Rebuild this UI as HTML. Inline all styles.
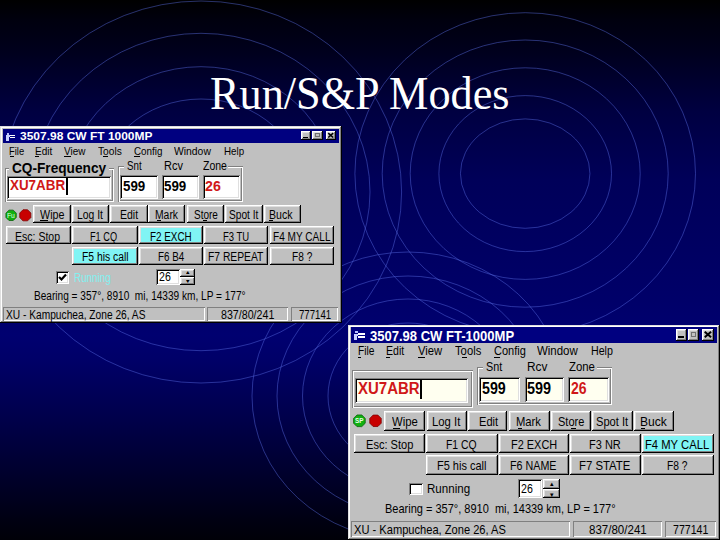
<!DOCTYPE html>
<html><head><meta charset="utf-8"><style>
html,body{margin:0;padding:0;}
body{width:720px;height:540px;overflow:hidden;position:relative;background:linear-gradient(to bottom,#000000 0px,#00000e 20px,#00001c 50px,#000041 112px,#000059 180px,#000062 250px,#000069 300px,#000070 335px,#000068 360px,#000054 400px,#00003f 440px,#000029 480px,#000012 520px,#000008 540px);font-family:'Liberation Sans',sans-serif;}
</style></head><body>
<svg style="position:absolute;left:0;top:0" width="720" height="540"><ellipse cx="525.2" cy="173.6" rx="64.75" ry="54.7" fill="none" stroke="rgba(90,110,230,0.45)" stroke-width="1"/><ellipse cx="525.2" cy="173.6" rx="86.3" ry="78" fill="none" stroke="rgba(90,110,230,0.45)" stroke-width="1"/><ellipse cx="525.2" cy="173.6" rx="115" ry="105.8" fill="none" stroke="rgba(90,110,230,0.45)" stroke-width="1"/><ellipse cx="525.2" cy="173.6" rx="143" ry="133.6" fill="none" stroke="rgba(90,110,230,0.45)" stroke-width="1"/><ellipse cx="525.2" cy="173.6" rx="170.3" ry="160.9" fill="none" stroke="rgba(90,110,230,0.45)" stroke-width="1"/><ellipse cx="201" cy="192" rx="102.8" ry="93" fill="none" stroke="rgba(90,110,230,0.45)" stroke-width="1"/><ellipse cx="201" cy="192" rx="134.6" ry="125.3" fill="none" stroke="rgba(90,110,230,0.45)" stroke-width="1"/><ellipse cx="201" cy="192" rx="169" ry="158.7" fill="none" stroke="rgba(90,110,230,0.45)" stroke-width="1"/><ellipse cx="201" cy="192" rx="200.6" ry="191" fill="none" stroke="rgba(90,110,230,0.45)" stroke-width="1"/><ellipse cx="408" cy="396" rx="80" ry="73" fill="none" stroke="rgba(90,110,230,0.45)" stroke-width="1"/><ellipse cx="408" cy="396" rx="105.5" ry="97" fill="none" stroke="rgba(90,110,230,0.45)" stroke-width="1"/><ellipse cx="408" cy="396" rx="131" ry="120" fill="none" stroke="rgba(90,110,230,0.45)" stroke-width="1"/><ellipse cx="408" cy="396" rx="156" ry="144" fill="none" stroke="rgba(90,110,230,0.45)" stroke-width="1"/></svg>
<div style="position:absolute;left:209.56px;top:69.99px;font:normal 47px 'Liberation Serif', serif;line-height:1;white-space:pre;color:#fff;transform-origin:0 0;transform:scaleX(0.9413);">Run/S&amp;P Modes</div>
<div style="position:absolute;left:0.00px;top:126.00px;width:342.00px;height:197.00px;background:#c0c0c0;box-shadow:inset -1px -1px #000,inset 1px 1px #dfdfdf,inset -2px -2px #808080,inset 2px 2px #fff;"></div>
<div style="position:absolute;left:3.00px;top:129.00px;width:336.00px;height:14.00px;background:#000080;"></div>
<div style="position:absolute;left:7.00px;top:132.50px;width:2.00px;height:2.00px;background:#b8c0ff;"></div>
<div style="position:absolute;left:6.00px;top:135.00px;width:2.50px;height:6.00px;background:#c8d0ff;"></div>
<div style="position:absolute;left:8.50px;top:135.00px;width:1.50px;height:2.00px;background:#c8d0ff;"></div>
<div style="position:absolute;left:10.00px;top:134.80px;width:5.00px;height:1.20px;background:#fff;"></div>
<div style="position:absolute;left:10.00px;top:136.90px;width:5.00px;height:1.30px;background:#fff;"></div>
<div style="position:absolute;left:20.00px;top:131.38px;font:bold 10.5px 'Liberation Sans', sans-serif;line-height:1;white-space:pre;color:#fff;transform-origin:0 0;transform:scaleX(1.1409);">3507.98 CW FT 1000MP</div>
<div style="position:absolute;left:301.00px;top:131.00px;width:9.50px;height:9.00px;background:#c0c0c0;box-shadow:inset -1px -1px #000,inset 1px 1px #fff,inset -2px -2px #808080,inset 2px 2px #dfdfdf;"></div>
<div style="position:absolute;left:312.00px;top:131.00px;width:11.00px;height:9.00px;background:#c0c0c0;box-shadow:inset -1px -1px #000,inset 1px 1px #fff,inset -2px -2px #808080,inset 2px 2px #dfdfdf;"></div>
<div style="position:absolute;left:326.00px;top:131.00px;width:10.00px;height:9.00px;background:#c0c0c0;box-shadow:inset -1px -1px #000,inset 1px 1px #fff,inset -2px -2px #808080,inset 2px 2px #dfdfdf;"></div>
<div style="position:absolute;left:303.09px;top:136.58px;width:4.75px;height:1.62px;background:#000;"></div>
<div style="position:absolute;left:314.75px;top:133.25px;width:4.95px;height:4.23px;background:transparent;box-sizing:border-box;border:1px solid #707070;border-top-width:1.5px;"></div>
<svg style="position:absolute;left:0;top:0;overflow:visible" width="1" height="1"><path d="M328.22 133.16 L333.18 137.48 M333.18 133.16 L328.22 137.48" stroke="#000" stroke-width="1.53"/></svg>
<div style="position:absolute;left:9.20px;top:145.53px;font:normal 11.5px 'Liberation Sans', sans-serif;line-height:1;white-space:pre;color:#000;transform-origin:0 0;transform:scaleX(0.8161);">File</div>
<div style="position:absolute;left:35.00px;top:145.53px;font:normal 11.5px 'Liberation Sans', sans-serif;line-height:1;white-space:pre;color:#000;transform-origin:0 0;transform:scaleX(0.8729);">Edit</div>
<div style="position:absolute;left:64.00px;top:145.53px;font:normal 11.5px 'Liberation Sans', sans-serif;line-height:1;white-space:pre;color:#000;transform-origin:0 0;transform:scaleX(0.8657);">View</div>
<div style="position:absolute;left:98.00px;top:145.53px;font:normal 11.5px 'Liberation Sans', sans-serif;line-height:1;white-space:pre;color:#000;transform-origin:0 0;transform:scaleX(0.8857);">Tools</div>
<div style="position:absolute;left:134.40px;top:145.53px;font:normal 11.5px 'Liberation Sans', sans-serif;line-height:1;white-space:pre;color:#000;transform-origin:0 0;transform:scaleX(0.8555);">Config</div>
<div style="position:absolute;left:174.00px;top:145.53px;font:normal 11.5px 'Liberation Sans', sans-serif;line-height:1;white-space:pre;color:#000;transform-origin:0 0;transform:scaleX(0.9015);">Window</div>
<div style="position:absolute;left:224.00px;top:145.53px;font:normal 11.5px 'Liberation Sans', sans-serif;line-height:1;white-space:pre;color:#000;transform-origin:0 0;transform:scaleX(0.8493);">Help</div>
<div style="position:absolute;left:10.00px;top:156.00px;width:3.50px;height:1.00px;background:#000;"></div>
<div style="position:absolute;left:35.00px;top:156.00px;width:3.75px;height:1.00px;background:#000;"></div>
<div style="position:absolute;left:63.75px;top:156.00px;width:7.25px;height:1.00px;background:#000;"></div>
<div style="position:absolute;left:102.50px;top:156.00px;width:5.00px;height:1.00px;background:#000;"></div>
<div style="position:absolute;left:134.00px;top:156.00px;width:6.00px;height:1.00px;background:#000;"></div>
<div style="position:absolute;left:4.50px;top:167.50px;width:109.50px;height:34.00px;background:transparent;box-shadow:inset 1px 1px #808080,inset -1px -1px #fff,inset 2px 2px #fff,inset -2px -2px #808080;"></div>
<div style="position:absolute;left:9.00px;top:162.00px;width:100.00px;height:9.00px;background:#c0c0c0;"></div>
<div style="position:absolute;left:11.70px;top:160.60px;font:bold 14px 'Liberation Sans', sans-serif;line-height:1;white-space:pre;color:#000;transform-origin:0 0;transform:scaleX(0.9754);">CQ-Frequency</div>
<div style="position:absolute;left:6.70px;top:175.80px;width:104.30px;height:23.40px;background:#fff;box-shadow:inset 1px 1px #808080,inset -1px -1px #fff,inset 2px 2px #000,inset -2px -2px #dfdfdf;"></div>
<div style="position:absolute;left:10.00px;top:178.10px;font:bold 14px 'Liberation Sans', sans-serif;line-height:1;white-space:pre;color:#d01818;transform-origin:0 0;transform:scaleX(0.9573);">XU7ABR</div>
<div style="position:absolute;left:65.50px;top:178.00px;width:2.00px;height:17.00px;background:#000;"></div>
<div style="position:absolute;left:117.70px;top:166.00px;width:125.00px;height:35.50px;background:transparent;box-shadow:inset 1px 1px #808080,inset -1px -1px #fff,inset 2px 2px #fff,inset -2px -2px #808080;"></div>
<div style="position:absolute;left:124.00px;top:160.00px;width:104.00px;height:10.00px;background:#c0c0c0;"></div>
<div style="position:absolute;left:126.70px;top:159.57px;font:normal 12.5px 'Liberation Sans', sans-serif;line-height:1;white-space:pre;color:#000;transform-origin:0 0;transform:scaleX(0.7776);">Snt</div>
<div style="position:absolute;left:163.72px;top:159.57px;font:normal 12.5px 'Liberation Sans', sans-serif;line-height:1;white-space:pre;color:#000;transform-origin:0 0;transform:scaleX(0.8789);">Rcv</div>
<div style="position:absolute;left:203.00px;top:159.57px;font:normal 12.5px 'Liberation Sans', sans-serif;line-height:1;white-space:pre;color:#000;transform-origin:0 0;transform:scaleX(0.8409);">Zone</div>
<div style="position:absolute;left:120.40px;top:175.40px;width:37.90px;height:24.00px;background:#fff;box-shadow:inset 1px 1px #808080,inset -1px -1px #fff,inset 2px 2px #000,inset -2px -2px #dfdfdf;"></div>
<div style="position:absolute;left:122.90px;top:179.10px;font:bold 14px 'Liberation Sans', sans-serif;line-height:1;white-space:pre;color:#000;transform-origin:0 0;transform:scaleX(0.9545);">599</div>
<div style="position:absolute;left:161.50px;top:175.40px;width:37.50px;height:24.00px;background:#fff;box-shadow:inset 1px 1px #808080,inset -1px -1px #fff,inset 2px 2px #000,inset -2px -2px #dfdfdf;"></div>
<div style="position:absolute;left:164.00px;top:179.10px;font:bold 14px 'Liberation Sans', sans-serif;line-height:1;white-space:pre;color:#000;transform-origin:0 0;transform:scaleX(0.9545);">599</div>
<div style="position:absolute;left:202.50px;top:175.40px;width:37.50px;height:24.00px;background:#fff;box-shadow:inset 1px 1px #808080,inset -1px -1px #fff,inset 2px 2px #000,inset -2px -2px #dfdfdf;"></div>
<div style="position:absolute;left:205.00px;top:179.10px;font:bold 14px 'Liberation Sans', sans-serif;line-height:1;white-space:pre;color:#d01818;transform-origin:0 0;transform:scaleX(1.0135);">26</div>
<svg style="position:absolute;left:0;top:0;overflow:visible" width="1" height="1"><polygon points="16.27,217.44 13.24,220.47 8.96,220.47 5.93,217.44 5.93,213.16 8.96,210.13 13.24,210.13 16.27,213.16" fill="#10b010" stroke="#0a600a" stroke-width="0.8"/></svg>
<div style="position:absolute;left:7.30px;top:211.82px;font:normal 7.5px 'Liberation Sans', sans-serif;line-height:1;white-space:pre;color:#e0ffe0;transform-origin:0 0;transform:scaleX(0.8973);">Fu</div>
<svg style="position:absolute;left:0;top:0;overflow:visible" width="1" height="1"><polygon points="30.84,217.60 27.60,220.84 23.00,220.84 19.76,217.60 19.76,213.00 23.00,209.76 27.60,209.76 30.84,213.00" fill="#c80000" stroke="#800000" stroke-width="0.8"/></svg>
<div style="position:absolute;left:33.30px;top:205.00px;width:37.50px;height:18.00px;background:#c0c0c0;box-shadow:inset -1px -1px #000,inset 1px 1px #fff,inset -2px -2px #808080,inset 2px 2px #dfdfdf;"></div>
<div style="position:absolute;left:40.00px;top:208.57px;font:normal 12.5px 'Liberation Sans', sans-serif;line-height:1;white-space:pre;color:#000;transform-origin:0 0;transform:scaleX(0.8588);">Wipe</div>
<div style="position:absolute;left:72.00px;top:205.00px;width:37.00px;height:18.00px;background:#c0c0c0;box-shadow:inset -1px -1px #000,inset 1px 1px #fff,inset -2px -2px #808080,inset 2px 2px #dfdfdf;"></div>
<div style="position:absolute;left:76.67px;top:208.57px;font:normal 12.5px 'Liberation Sans', sans-serif;line-height:1;white-space:pre;color:#000;transform-origin:0 0;transform:scaleX(0.8279);">Log It</div>
<div style="position:absolute;left:110.00px;top:205.00px;width:37.50px;height:18.00px;background:#c0c0c0;box-shadow:inset -1px -1px #000,inset 1px 1px #fff,inset -2px -2px #808080,inset 2px 2px #dfdfdf;"></div>
<div style="position:absolute;left:119.96px;top:208.57px;font:normal 12.5px 'Liberation Sans', sans-serif;line-height:1;white-space:pre;color:#000;transform-origin:0 0;transform:scaleX(0.8402);">Edit</div>
<div style="position:absolute;left:148.00px;top:205.00px;width:37.40px;height:18.00px;background:#c0c0c0;box-shadow:inset -1px -1px #000,inset 1px 1px #fff,inset -2px -2px #808080,inset 2px 2px #dfdfdf;"></div>
<div style="position:absolute;left:155.37px;top:208.57px;font:normal 12.5px 'Liberation Sans', sans-serif;line-height:1;white-space:pre;color:#000;transform-origin:0 0;transform:scaleX(0.8283);">Mark</div>
<div style="position:absolute;left:186.50px;top:205.00px;width:37.50px;height:18.00px;background:#c0c0c0;box-shadow:inset -1px -1px #000,inset 1px 1px #fff,inset -2px -2px #808080,inset 2px 2px #dfdfdf;"></div>
<div style="position:absolute;left:193.60px;top:208.57px;font:normal 12.5px 'Liberation Sans', sans-serif;line-height:1;white-space:pre;color:#000;transform-origin:0 0;transform:scaleX(0.7987);">Store</div>
<div style="position:absolute;left:224.60px;top:205.00px;width:38.10px;height:18.00px;background:#c0c0c0;box-shadow:inset -1px -1px #000,inset 1px 1px #fff,inset -2px -2px #808080,inset 2px 2px #dfdfdf;"></div>
<div style="position:absolute;left:228.50px;top:208.57px;font:normal 12.5px 'Liberation Sans', sans-serif;line-height:1;white-space:pre;color:#000;transform-origin:0 0;transform:scaleX(0.8129);">Spot It</div>
<div style="position:absolute;left:263.50px;top:205.00px;width:37.00px;height:18.00px;background:#c0c0c0;box-shadow:inset -1px -1px #000,inset 1px 1px #fff,inset -2px -2px #808080,inset 2px 2px #dfdfdf;"></div>
<div style="position:absolute;left:268.55px;top:208.57px;font:normal 12.5px 'Liberation Sans', sans-serif;line-height:1;white-space:pre;color:#000;transform-origin:0 0;transform:scaleX(0.8461);">Buck</div>
<div style="position:absolute;left:40.00px;top:219.80px;width:7.50px;height:1.00px;background:#000;"></div>
<div style="position:absolute;left:156.70px;top:219.80px;width:4.80px;height:1.00px;background:#000;"></div>
<div style="position:absolute;left:202.90px;top:219.80px;width:3.80px;height:1.00px;background:#000;"></div>
<div style="position:absolute;left:268.90px;top:219.80px;width:4.40px;height:1.00px;background:#000;"></div>
<div style="position:absolute;left:5.50px;top:226.00px;width:65.75px;height:18.00px;background:#c0c0c0;box-shadow:inset -1px -1px #000,inset 1px 1px #fff,inset -2px -2px #808080,inset 2px 2px #dfdfdf;"></div>
<div style="position:absolute;left:15.41px;top:230.78px;font:normal 12.5px 'Liberation Sans', sans-serif;line-height:1;white-space:pre;color:#000;transform-origin:0 0;transform:scaleX(0.8421);">Esc: Stop</div>
<div style="position:absolute;left:72.00px;top:226.00px;width:66.00px;height:18.00px;background:#c0c0c0;box-shadow:inset -1px -1px #000,inset 1px 1px #fff,inset -2px -2px #808080,inset 2px 2px #dfdfdf;"></div>
<div style="position:absolute;left:90.27px;top:230.78px;font:normal 12.5px 'Liberation Sans', sans-serif;line-height:1;white-space:pre;color:#000;transform-origin:0 0;transform:scaleX(0.7343);">F1 CQ</div>
<div style="position:absolute;left:138.75px;top:226.00px;width:64.15px;height:18.00px;background:#80f4f4;box-shadow:inset -1px -1px #000,inset 1px 1px #fff,inset -2px -2px #808080,inset 2px 2px #dfdfdf;"></div>
<div style="position:absolute;left:149.61px;top:230.78px;font:normal 12.5px 'Liberation Sans', sans-serif;line-height:1;white-space:pre;color:#000;transform-origin:0 0;transform:scaleX(0.7882);">F2 EXCH</div>
<div style="position:absolute;left:204.30px;top:226.00px;width:64.20px;height:18.00px;background:#c0c0c0;box-shadow:inset -1px -1px #000,inset 1px 1px #fff,inset -2px -2px #808080,inset 2px 2px #dfdfdf;"></div>
<div style="position:absolute;left:223.14px;top:230.78px;font:normal 12.5px 'Liberation Sans', sans-serif;line-height:1;white-space:pre;color:#000;transform-origin:0 0;transform:scaleX(0.7597);">F3 TU</div>
<div style="position:absolute;left:270.00px;top:226.00px;width:64.00px;height:18.00px;background:#c0c0c0;box-shadow:inset -1px -1px #000,inset 1px 1px #fff,inset -2px -2px #808080,inset 2px 2px #dfdfdf;"></div>
<div style="position:absolute;left:273.49px;top:230.78px;font:normal 12.5px 'Liberation Sans', sans-serif;line-height:1;white-space:pre;color:#000;transform-origin:0 0;transform:scaleX(0.8060);">F4 MY CALL</div>
<div style="position:absolute;left:72.00px;top:246.50px;width:66.00px;height:18.00px;background:#80f4f4;box-shadow:inset -1px -1px #000,inset 1px 1px #fff,inset -2px -2px #808080,inset 2px 2px #dfdfdf;"></div>
<div style="position:absolute;left:81.67px;top:251.07px;font:normal 12.5px 'Liberation Sans', sans-serif;line-height:1;white-space:pre;color:#000;transform-origin:0 0;transform:scaleX(0.8258);">F5 his call</div>
<div style="position:absolute;left:138.75px;top:246.50px;width:64.15px;height:18.00px;background:#c0c0c0;box-shadow:inset -1px -1px #000,inset 1px 1px #fff,inset -2px -2px #808080,inset 2px 2px #dfdfdf;"></div>
<div style="position:absolute;left:157.82px;top:251.07px;font:normal 12.5px 'Liberation Sans', sans-serif;line-height:1;white-space:pre;color:#000;transform-origin:0 0;transform:scaleX(0.7840);">F6 B4</div>
<div style="position:absolute;left:204.30px;top:246.50px;width:64.20px;height:18.00px;background:#c0c0c0;box-shadow:inset -1px -1px #000,inset 1px 1px #fff,inset -2px -2px #808080,inset 2px 2px #dfdfdf;"></div>
<div style="position:absolute;left:208.48px;top:251.07px;font:normal 12.5px 'Liberation Sans', sans-serif;line-height:1;white-space:pre;color:#000;transform-origin:0 0;transform:scaleX(0.8239);">F7 REPEAT</div>
<div style="position:absolute;left:270.00px;top:246.50px;width:64.00px;height:18.00px;background:#c0c0c0;box-shadow:inset -1px -1px #000,inset 1px 1px #fff,inset -2px -2px #808080,inset 2px 2px #dfdfdf;"></div>
<div style="position:absolute;left:291.89px;top:251.07px;font:normal 12.5px 'Liberation Sans', sans-serif;line-height:1;white-space:pre;color:#000;transform-origin:0 0;transform:scaleX(0.8105);">F8 ?</div>
<div style="position:absolute;left:56.00px;top:271.00px;width:12.75px;height:12.75px;background:#fff;box-shadow:inset 1px 1px #808080,inset -1px -1px #fff,inset 2px 2px #000,inset -2px -2px #dfdfdf;"></div>
<svg style="position:absolute;left:56px;top:271px" width="13" height="13"><path d="M3 6 L5.5 8.5 L10 3.5" stroke="#000" stroke-width="2.2" fill="none"/></svg>
<div style="position:absolute;left:74.21px;top:271.88px;font:normal 12.5px 'Liberation Sans', sans-serif;line-height:1;white-space:pre;color:#80f0f0;transform-origin:0 0;transform:scaleX(0.7893);">Running</div>
<div style="position:absolute;left:156.20px;top:268.50px;width:23.40px;height:16.50px;background:#fff;box-shadow:inset 1px 1px #808080,inset -1px -1px #fff,inset 2px 2px #000,inset -2px -2px #dfdfdf;"></div>
<div style="position:absolute;left:159.00px;top:271.38px;font:normal 12.5px 'Liberation Sans', sans-serif;line-height:1;white-space:pre;color:#000;transform-origin:0 0;transform:scaleX(0.8458);">26</div>
<div style="position:absolute;left:180.00px;top:268.50px;width:14.70px;height:8.20px;background:#c0c0c0;box-shadow:inset -1px -1px #000,inset 1px 1px #fff,inset -2px -2px #808080,inset 2px 2px #dfdfdf;"></div>
<div style="position:absolute;left:180.00px;top:276.70px;width:14.70px;height:8.30px;background:#c0c0c0;box-shadow:inset -1px -1px #000,inset 1px 1px #fff,inset -2px -2px #808080,inset 2px 2px #dfdfdf;"></div>
<div style="position:absolute;left:185.50px;top:269.40px;font:normal 6px 'Liberation Sans', sans-serif;line-height:1;white-space:pre;color:#000;transform-origin:0 0;transform:scaleX(1.1667);">▴</div>
<div style="position:absolute;left:185.50px;top:277.90px;font:normal 6px 'Liberation Sans', sans-serif;line-height:1;white-space:pre;color:#000;transform-origin:0 0;transform:scaleX(1.1667);">▾</div>
<div style="position:absolute;left:34.19px;top:289.88px;font:normal 12.5px 'Liberation Sans', sans-serif;line-height:1;white-space:pre;color:#000;transform-origin:0 0;transform:scaleX(0.8077);">Bearing = 357°, 8910  mi, 14339 km, LP = 177°</div>
<div style="position:absolute;left:3.00px;top:307.00px;width:202.00px;height:14.00px;background:#c0c0c0;box-shadow:inset 1px 1px #808080,inset -1px -1px #fff;"></div>
<div style="position:absolute;left:206.70px;top:307.00px;width:81.10px;height:14.00px;background:#c0c0c0;box-shadow:inset 1px 1px #808080,inset -1px -1px #fff;"></div>
<div style="position:absolute;left:291.00px;top:307.00px;width:46.80px;height:14.00px;background:#c0c0c0;box-shadow:inset 1px 1px #808080,inset -1px -1px #fff;"></div>
<div style="position:absolute;left:6.25px;top:308.68px;font:normal 12.5px 'Liberation Sans', sans-serif;line-height:1;white-space:pre;color:#000;transform-origin:0 0;transform:scaleX(0.8159);">XU - Kampuchea, Zone 26, AS</div>
<div style="position:absolute;left:221.00px;top:308.68px;font:normal 12.5px 'Liberation Sans', sans-serif;line-height:1;white-space:pre;color:#000;transform-origin:0 0;transform:scaleX(0.8529);">837/80/241</div>
<div style="position:absolute;left:298.90px;top:308.68px;font:normal 12.5px 'Liberation Sans', sans-serif;line-height:1;white-space:pre;color:#000;transform-origin:0 0;transform:scaleX(0.7687);">777141</div>
<div style="position:absolute;left:348.00px;top:324.50px;width:371.50px;height:215.50px;background:#c0c0c0;box-shadow:inset -1px -1px #000,inset 1px 1px #dfdfdf,inset -2px -2px #808080,inset 2px 2px #fff;"></div>
<div style="position:absolute;left:351.00px;top:327.00px;width:366.00px;height:15.80px;background:#000080;"></div>
<div style="position:absolute;left:355.00px;top:331.00px;width:2.50px;height:2.00px;background:#b8c0ff;"></div>
<div style="position:absolute;left:354.00px;top:334.00px;width:2.50px;height:6.00px;background:#c8d0ff;"></div>
<div style="position:absolute;left:356.50px;top:334.00px;width:1.50px;height:2.00px;background:#c8d0ff;"></div>
<div style="position:absolute;left:358.00px;top:332.90px;width:7.00px;height:1.70px;background:#fff;"></div>
<div style="position:absolute;left:358.00px;top:335.80px;width:7.00px;height:2.40px;background:#fff;"></div>
<div style="position:absolute;left:370.00px;top:328.80px;font:bold 14px 'Liberation Sans', sans-serif;line-height:1;white-space:pre;color:#fff;transform-origin:0 0;transform:scaleX(0.9304);">3507.98 CW FT-1000MP</div>
<div style="position:absolute;left:675.50px;top:329.00px;width:11.20px;height:11.50px;background:#c0c0c0;box-shadow:inset -1px -1px #000,inset 1px 1px #fff,inset -2px -2px #808080,inset 2px 2px #dfdfdf;"></div>
<div style="position:absolute;left:688.00px;top:329.00px;width:11.00px;height:11.50px;background:#c0c0c0;box-shadow:inset -1px -1px #000,inset 1px 1px #fff,inset -2px -2px #808080,inset 2px 2px #dfdfdf;"></div>
<div style="position:absolute;left:702.00px;top:329.00px;width:12.40px;height:11.50px;background:#c0c0c0;box-shadow:inset -1px -1px #000,inset 1px 1px #fff,inset -2px -2px #808080,inset 2px 2px #dfdfdf;"></div>
<div style="position:absolute;left:677.96px;top:336.13px;width:5.60px;height:2.07px;background:#000;"></div>
<div style="position:absolute;left:690.75px;top:331.88px;width:4.95px;height:5.40px;background:transparent;box-sizing:border-box;border:1px solid #707070;border-top-width:1.5px;"></div>
<svg style="position:absolute;left:0;top:0;overflow:visible" width="1" height="1"><path d="M704.73 331.76 L711.07 337.28 M711.07 331.76 L704.73 337.28" stroke="#000" stroke-width="1.96"/></svg>
<div style="position:absolute;left:357.50px;top:344.80px;font:normal 12px 'Liberation Sans', sans-serif;line-height:1;white-space:pre;color:#000;transform-origin:0 0;transform:scaleX(0.8519);">File</div>
<div style="position:absolute;left:386.25px;top:344.80px;font:normal 12px 'Liberation Sans', sans-serif;line-height:1;white-space:pre;color:#000;transform-origin:0 0;transform:scaleX(0.8785);">Edit</div>
<div style="position:absolute;left:418.00px;top:344.80px;font:normal 12px 'Liberation Sans', sans-serif;line-height:1;white-space:pre;color:#000;transform-origin:0 0;transform:scaleX(0.9377);">View</div>
<div style="position:absolute;left:455.00px;top:344.80px;font:normal 12px 'Liberation Sans', sans-serif;line-height:1;white-space:pre;color:#000;transform-origin:0 0;transform:scaleX(0.9370);">Tools</div>
<div style="position:absolute;left:493.75px;top:344.80px;font:normal 12px 'Liberation Sans', sans-serif;line-height:1;white-space:pre;color:#000;transform-origin:0 0;transform:scaleX(0.9187);">Config</div>
<div style="position:absolute;left:537.20px;top:344.80px;font:normal 12px 'Liberation Sans', sans-serif;line-height:1;white-space:pre;color:#000;transform-origin:0 0;transform:scaleX(0.9555);">Window</div>
<div style="position:absolute;left:590.80px;top:344.80px;font:normal 12px 'Liberation Sans', sans-serif;line-height:1;white-space:pre;color:#000;transform-origin:0 0;transform:scaleX(0.8878);">Help</div>
<div style="position:absolute;left:357.50px;top:357.30px;width:3.50px;height:1.00px;background:#000;"></div>
<div style="position:absolute;left:386.00px;top:357.30px;width:4.00px;height:1.00px;background:#000;"></div>
<div style="position:absolute;left:418.00px;top:357.30px;width:7.00px;height:1.00px;background:#000;"></div>
<div style="position:absolute;left:462.00px;top:357.30px;width:5.00px;height:1.00px;background:#000;"></div>
<div style="position:absolute;left:494.00px;top:357.30px;width:6.00px;height:1.00px;background:#000;"></div>
<div style="position:absolute;left:352.00px;top:370.00px;width:120.50px;height:37.50px;background:transparent;box-shadow:inset 1px 1px #808080,inset -1px -1px #fff,inset 2px 2px #fff,inset -2px -2px #808080;"></div>
<div style="position:absolute;left:354.50px;top:377.50px;width:113.50px;height:25.50px;background:#fffff0;box-shadow:inset 1px 1px #808080,inset -1px -1px #fff,inset 2px 2px #000,inset -2px -2px #dfdfdf;"></div>
<div style="position:absolute;left:357.50px;top:380.90px;font:bold 16px 'Liberation Sans', sans-serif;line-height:1;white-space:pre;color:#d01818;transform-origin:0 0;transform:scaleX(0.9361);">XU7ABR</div>
<div style="position:absolute;left:420.00px;top:380.00px;width:2.00px;height:19.00px;background:#000;"></div>
<div style="position:absolute;left:476.70px;top:367.40px;width:135.00px;height:37.50px;background:transparent;box-shadow:inset 1px 1px #808080,inset -1px -1px #fff,inset 2px 2px #fff,inset -2px -2px #808080;"></div>
<div style="position:absolute;left:483.00px;top:360.00px;width:114.00px;height:10.00px;background:#c0c0c0;"></div>
<div style="position:absolute;left:485.60px;top:360.88px;font:normal 12.5px 'Liberation Sans', sans-serif;line-height:1;white-space:pre;color:#000;transform-origin:0 0;transform:scaleX(0.8658);">Snt</div>
<div style="position:absolute;left:526.95px;top:360.88px;font:normal 12.5px 'Liberation Sans', sans-serif;line-height:1;white-space:pre;color:#000;transform-origin:0 0;transform:scaleX(0.9494);">Rcv</div>
<div style="position:absolute;left:569.00px;top:360.88px;font:normal 12.5px 'Liberation Sans', sans-serif;line-height:1;white-space:pre;color:#000;transform-origin:0 0;transform:scaleX(0.9110);">Zone</div>
<div style="position:absolute;left:478.75px;top:377.20px;width:41.25px;height:25.00px;background:#fffff0;box-shadow:inset 1px 1px #808080,inset -1px -1px #fff,inset 2px 2px #000,inset -2px -2px #dfdfdf;"></div>
<div style="position:absolute;left:482.00px;top:380.90px;font:bold 16px 'Liberation Sans', sans-serif;line-height:1;white-space:pre;color:#000;transform-origin:0 0;transform:scaleX(0.8882);">599</div>
<div style="position:absolute;left:524.60px;top:377.20px;width:39.15px;height:25.00px;background:#fffff0;box-shadow:inset 1px 1px #808080,inset -1px -1px #fff,inset 2px 2px #000,inset -2px -2px #dfdfdf;"></div>
<div style="position:absolute;left:526.70px;top:380.90px;font:bold 16px 'Liberation Sans', sans-serif;line-height:1;white-space:pre;color:#000;transform-origin:0 0;transform:scaleX(0.8994);">599</div>
<div style="position:absolute;left:568.30px;top:377.20px;width:40.90px;height:25.00px;background:#fffff0;box-shadow:inset 1px 1px #808080,inset -1px -1px #fff,inset 2px 2px #000,inset -2px -2px #dfdfdf;"></div>
<div style="position:absolute;left:571.00px;top:380.90px;font:bold 16px 'Liberation Sans', sans-serif;line-height:1;white-space:pre;color:#d01818;transform-origin:0 0;transform:scaleX(0.8772);">26</div>
<svg style="position:absolute;left:0;top:0;overflow:visible" width="1" height="1"><polygon points="365.22,423.21 361.81,426.62 356.99,426.62 353.58,423.21 353.58,418.39 356.99,414.98 361.81,414.98 365.22,418.39" fill="#10b010" stroke="#0a600a" stroke-width="0.8"/></svg>
<div style="position:absolute;left:355.00px;top:417.20px;font:bold 8px 'Liberation Sans', sans-serif;line-height:1;white-space:pre;color:#e8ffe8;transform-origin:0 0;transform:scaleX(0.7939);">SP</div>
<svg style="position:absolute;left:0;top:0;overflow:visible" width="1" height="1"><polygon points="381.23,423.17 377.87,426.53 373.13,426.53 369.77,423.17 369.77,418.43 373.13,415.07 377.87,415.07 381.23,418.43" fill="#c80000" stroke="#800000" stroke-width="0.8"/></svg>
<div style="position:absolute;left:383.90px;top:411.00px;width:41.60px;height:19.50px;background:#c0c0c0;box-shadow:inset -1px -1px #000,inset 1px 1px #fff,inset -2px -2px #808080,inset 2px 2px #dfdfdf;"></div>
<div style="position:absolute;left:392.20px;top:414.95px;font:normal 13px 'Liberation Sans', sans-serif;line-height:1;white-space:pre;color:#000;transform-origin:0 0;transform:scaleX(0.8711);">Wipe</div>
<div style="position:absolute;left:427.00px;top:411.00px;width:39.70px;height:19.50px;background:#c0c0c0;box-shadow:inset -1px -1px #000,inset 1px 1px #fff,inset -2px -2px #808080,inset 2px 2px #dfdfdf;"></div>
<div style="position:absolute;left:431.63px;top:414.95px;font:normal 13px 'Liberation Sans', sans-serif;line-height:1;white-space:pre;color:#000;transform-origin:0 0;transform:scaleX(0.8711);">Log It</div>
<div style="position:absolute;left:467.80px;top:411.00px;width:39.70px;height:19.50px;background:#c0c0c0;box-shadow:inset -1px -1px #000,inset 1px 1px #fff,inset -2px -2px #808080,inset 2px 2px #dfdfdf;"></div>
<div style="position:absolute;left:478.85px;top:414.95px;font:normal 13px 'Liberation Sans', sans-serif;line-height:1;white-space:pre;color:#000;transform-origin:0 0;transform:scaleX(0.8536);">Edit</div>
<div style="position:absolute;left:509.00px;top:411.00px;width:41.00px;height:19.50px;background:#c0c0c0;box-shadow:inset -1px -1px #000,inset 1px 1px #fff,inset -2px -2px #808080,inset 2px 2px #dfdfdf;"></div>
<div style="position:absolute;left:516.34px;top:414.95px;font:normal 13px 'Liberation Sans', sans-serif;line-height:1;white-space:pre;color:#000;transform-origin:0 0;transform:scaleX(0.8630);">Mark</div>
<div style="position:absolute;left:551.00px;top:411.00px;width:39.80px;height:19.50px;background:#c0c0c0;box-shadow:inset -1px -1px #000,inset 1px 1px #fff,inset -2px -2px #808080,inset 2px 2px #dfdfdf;"></div>
<div style="position:absolute;left:558.30px;top:414.95px;font:normal 13px 'Liberation Sans', sans-serif;line-height:1;white-space:pre;color:#000;transform-origin:0 0;transform:scaleX(0.8463);">Store</div>
<div style="position:absolute;left:592.00px;top:411.00px;width:40.50px;height:19.50px;background:#c0c0c0;box-shadow:inset -1px -1px #000,inset 1px 1px #fff,inset -2px -2px #808080,inset 2px 2px #dfdfdf;"></div>
<div style="position:absolute;left:596.40px;top:414.95px;font:normal 13px 'Liberation Sans', sans-serif;line-height:1;white-space:pre;color:#000;transform-origin:0 0;transform:scaleX(0.8560);">Spot It</div>
<div style="position:absolute;left:634.00px;top:411.00px;width:40.00px;height:19.50px;background:#c0c0c0;box-shadow:inset -1px -1px #000,inset 1px 1px #fff,inset -2px -2px #808080,inset 2px 2px #dfdfdf;"></div>
<div style="position:absolute;left:639.87px;top:414.95px;font:normal 13px 'Liberation Sans', sans-serif;line-height:1;white-space:pre;color:#000;transform-origin:0 0;transform:scaleX(0.9295);">Buck</div>
<div style="position:absolute;left:392.50px;top:427.50px;width:7.50px;height:1.00px;background:#000;"></div>
<div style="position:absolute;left:517.50px;top:427.50px;width:4.50px;height:1.00px;background:#000;"></div>
<div style="position:absolute;left:571.00px;top:427.50px;width:5.00px;height:1.00px;background:#000;"></div>
<div style="position:absolute;left:640.80px;top:427.50px;width:4.20px;height:1.00px;background:#000;"></div>
<div style="position:absolute;left:353.90px;top:433.50px;width:71.10px;height:19.50px;background:#c0c0c0;box-shadow:inset -1px -1px #000,inset 1px 1px #fff,inset -2px -2px #808080,inset 2px 2px #dfdfdf;"></div>
<div style="position:absolute;left:365.85px;top:437.75px;font:normal 13px 'Liberation Sans', sans-serif;line-height:1;white-space:pre;color:#000;transform-origin:0 0;transform:scaleX(0.8510);">Esc: Stop</div>
<div style="position:absolute;left:426.00px;top:433.50px;width:71.80px;height:19.50px;background:#c0c0c0;box-shadow:inset -1px -1px #000,inset 1px 1px #fff,inset -2px -2px #808080,inset 2px 2px #dfdfdf;"></div>
<div style="position:absolute;left:445.60px;top:437.75px;font:normal 13px 'Liberation Sans', sans-serif;line-height:1;white-space:pre;color:#000;transform-origin:0 0;transform:scaleX(0.7990);">F1 CQ</div>
<div style="position:absolute;left:499.00px;top:433.50px;width:69.80px;height:19.50px;background:#c0c0c0;box-shadow:inset -1px -1px #000,inset 1px 1px #fff,inset -2px -2px #808080,inset 2px 2px #dfdfdf;"></div>
<div style="position:absolute;left:510.76px;top:437.75px;font:normal 13px 'Liberation Sans', sans-serif;line-height:1;white-space:pre;color:#000;transform-origin:0 0;transform:scaleX(0.8409);">F2 EXCH</div>
<div style="position:absolute;left:570.30px;top:433.50px;width:70.40px;height:19.50px;background:#c0c0c0;box-shadow:inset -1px -1px #000,inset 1px 1px #fff,inset -2px -2px #808080,inset 2px 2px #dfdfdf;"></div>
<div style="position:absolute;left:589.35px;top:437.75px;font:normal 13px 'Liberation Sans', sans-serif;line-height:1;white-space:pre;color:#000;transform-origin:0 0;transform:scaleX(0.8460);">F3 NR</div>
<div style="position:absolute;left:642.00px;top:433.50px;width:72.00px;height:19.50px;background:#80f4f4;box-shadow:inset -1px -1px #000,inset 1px 1px #fff,inset -2px -2px #808080,inset 2px 2px #dfdfdf;"></div>
<div style="position:absolute;left:645.34px;top:437.75px;font:normal 13px 'Liberation Sans', sans-serif;line-height:1;white-space:pre;color:#000;transform-origin:0 0;transform:scaleX(0.8649);">F4 MY CALL</div>
<div style="position:absolute;left:426.00px;top:455.00px;width:71.80px;height:19.70px;background:#c0c0c0;box-shadow:inset -1px -1px #000,inset 1px 1px #fff,inset -2px -2px #808080,inset 2px 2px #dfdfdf;"></div>
<div style="position:absolute;left:437.15px;top:459.45px;font:normal 13px 'Liberation Sans', sans-serif;line-height:1;white-space:pre;color:#000;transform-origin:0 0;transform:scaleX(0.8450);">F5 his call</div>
<div style="position:absolute;left:499.00px;top:455.00px;width:69.80px;height:19.70px;background:#c0c0c0;box-shadow:inset -1px -1px #000,inset 1px 1px #fff,inset -2px -2px #808080,inset 2px 2px #dfdfdf;"></div>
<div style="position:absolute;left:509.88px;top:459.45px;font:normal 13px 'Liberation Sans', sans-serif;line-height:1;white-space:pre;color:#000;transform-origin:0 0;transform:scaleX(0.8245);">F6 NAME</div>
<div style="position:absolute;left:570.30px;top:455.00px;width:70.40px;height:19.70px;background:#c0c0c0;box-shadow:inset -1px -1px #000,inset 1px 1px #fff,inset -2px -2px #808080,inset 2px 2px #dfdfdf;"></div>
<div style="position:absolute;left:579.23px;top:459.45px;font:normal 13px 'Liberation Sans', sans-serif;line-height:1;white-space:pre;color:#000;transform-origin:0 0;transform:scaleX(0.8747);">F7 STATE</div>
<div style="position:absolute;left:642.00px;top:455.00px;width:72.00px;height:19.70px;background:#c0c0c0;box-shadow:inset -1px -1px #000,inset 1px 1px #fff,inset -2px -2px #808080,inset 2px 2px #dfdfdf;"></div>
<div style="position:absolute;left:666.81px;top:459.45px;font:normal 13px 'Liberation Sans', sans-serif;line-height:1;white-space:pre;color:#000;transform-origin:0 0;transform:scaleX(0.7909);">F8 ?</div>
<div style="position:absolute;left:409.40px;top:483.30px;width:13.40px;height:11.70px;background:#fff;box-shadow:inset 1px 1px #808080,inset -1px -1px #fff,inset 2px 2px #000,inset -2px -2px #dfdfdf;"></div>
<div style="position:absolute;left:427.11px;top:481.95px;font:normal 13px 'Liberation Sans', sans-serif;line-height:1;white-space:pre;color:#000;transform-origin:0 0;transform:scaleX(0.8899);">Running</div>
<div style="position:absolute;left:517.70px;top:479.40px;width:24.50px;height:19.00px;background:#fff;box-shadow:inset 1px 1px #808080,inset -1px -1px #fff,inset 2px 2px #000,inset -2px -2px #dfdfdf;"></div>
<div style="position:absolute;left:521.40px;top:481.85px;font:normal 13px 'Liberation Sans', sans-serif;line-height:1;white-space:pre;color:#000;transform-origin:0 0;transform:scaleX(0.8152);">26</div>
<div style="position:absolute;left:543.40px;top:479.40px;width:16.20px;height:9.60px;background:#c0c0c0;box-shadow:inset -1px -1px #000,inset 1px 1px #fff,inset -2px -2px #808080,inset 2px 2px #dfdfdf;"></div>
<div style="position:absolute;left:543.40px;top:489.00px;width:16.20px;height:9.40px;background:#c0c0c0;box-shadow:inset -1px -1px #000,inset 1px 1px #fff,inset -2px -2px #808080,inset 2px 2px #dfdfdf;"></div>
<div style="position:absolute;left:549.50px;top:480.05px;font:normal 7px 'Liberation Sans', sans-serif;line-height:1;white-space:pre;color:#000;transform-origin:0 0;transform:scaleX(1.0000);">▴</div>
<div style="position:absolute;left:549.50px;top:490.55px;font:normal 7px 'Liberation Sans', sans-serif;line-height:1;white-space:pre;color:#000;transform-origin:0 0;transform:scaleX(1.0000);">▾</div>
<div style="position:absolute;left:384.95px;top:501.95px;font:normal 13px 'Liberation Sans', sans-serif;line-height:1;white-space:pre;color:#000;transform-origin:0 0;transform:scaleX(0.8463);">Bearing = 357°, 8910  mi, 14339 km, LP = 177°</div>
<div style="position:absolute;left:350.50px;top:521.30px;width:219.80px;height:15.30px;background:#c0c0c0;box-shadow:inset 1px 1px #808080,inset -1px -1px #fff;"></div>
<div style="position:absolute;left:573.40px;top:521.30px;width:88.60px;height:15.30px;background:#c0c0c0;box-shadow:inset 1px 1px #808080,inset -1px -1px #fff;"></div>
<div style="position:absolute;left:665.00px;top:521.30px;width:50.60px;height:15.30px;background:#c0c0c0;box-shadow:inset 1px 1px #808080,inset -1px -1px #fff;"></div>
<div style="position:absolute;left:353.90px;top:522.75px;font:normal 13px 'Liberation Sans', sans-serif;line-height:1;white-space:pre;color:#000;transform-origin:0 0;transform:scaleX(0.8545);">XU - Kampuchea, Zone 26, AS</div>
<div style="position:absolute;left:588.70px;top:522.55px;font:normal 13px 'Liberation Sans', sans-serif;line-height:1;white-space:pre;color:#000;transform-origin:0 0;transform:scaleX(0.8869);">837/80/241</div>
<div style="position:absolute;left:672.80px;top:522.55px;font:normal 13px 'Liberation Sans', sans-serif;line-height:1;white-space:pre;color:#000;transform-origin:0 0;transform:scaleX(0.8158);">777141</div>
</body></html>
